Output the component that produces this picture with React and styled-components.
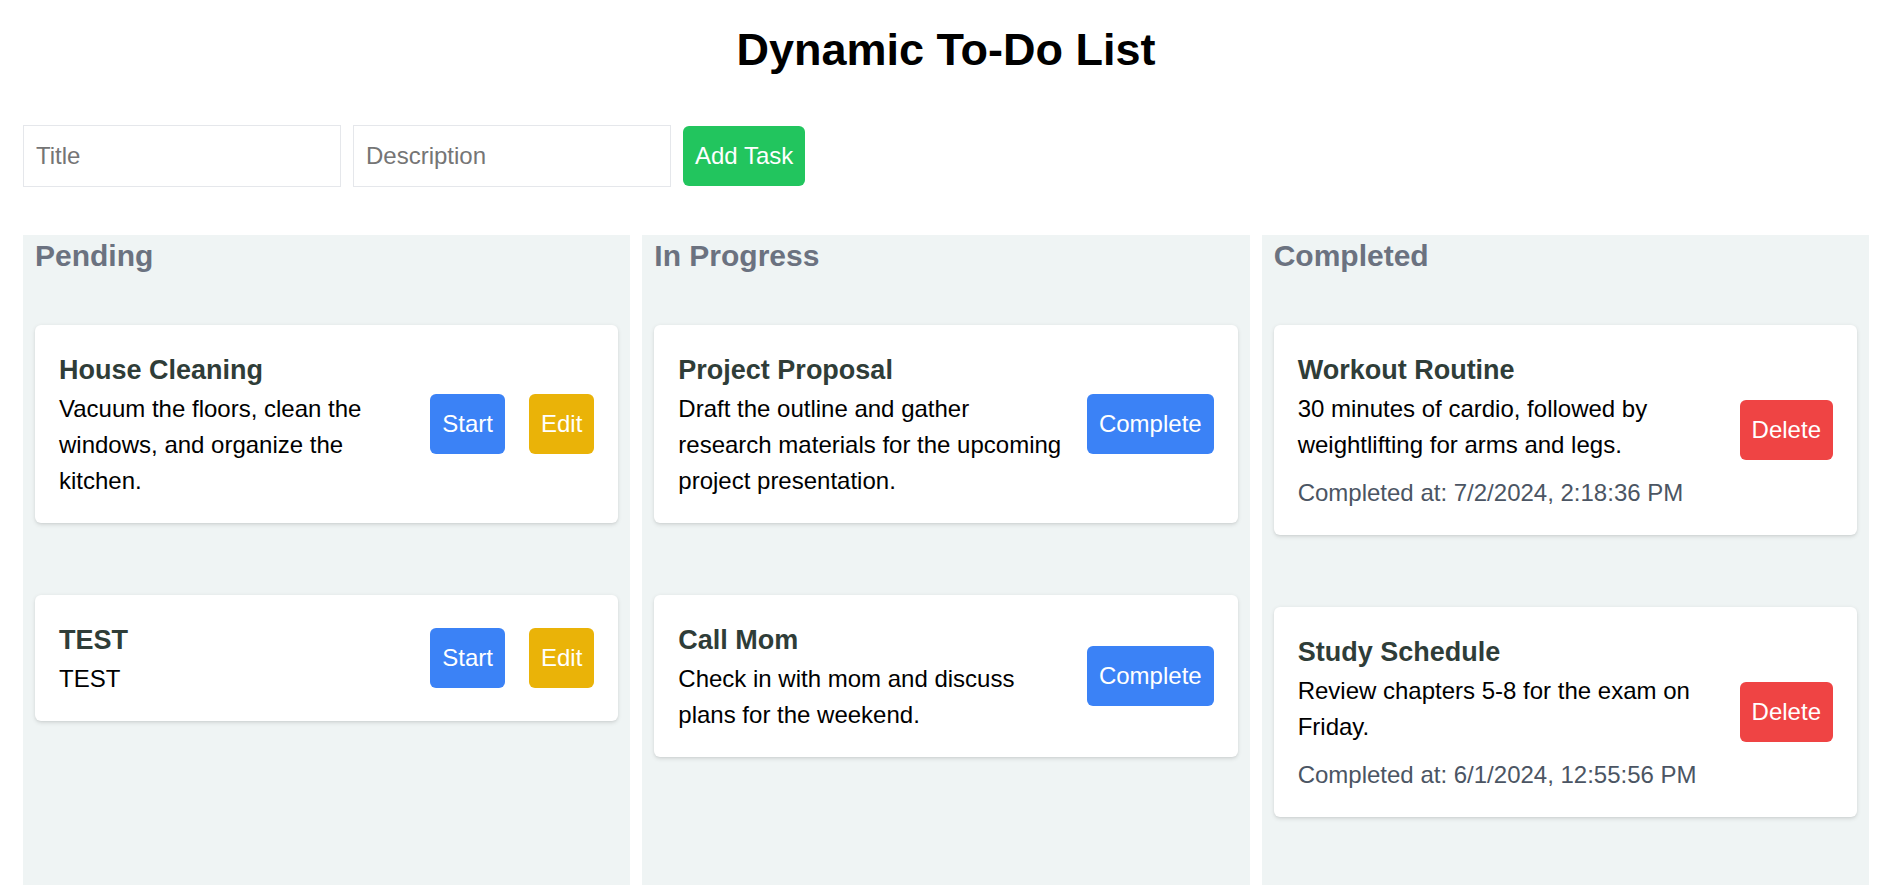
import React from 'react'
import styled, { createGlobalStyle } from 'styled-components'

const GlobalStyle = createGlobalStyle`
  * {
    box-sizing: border-box;
  }

  body {
    margin: 0;
    background: #ffffff;
    font-family: "Liberation Sans", Arial, sans-serif;
  }
`

const Page = styled.div`
  padding: 23px 16px 0 23px;
`

const Heading = styled.h1`
  margin: 0 0 48px;
  text-align: center;
  font-size: 45px;
  line-height: 54px;
  font-weight: 700;
  color: #000000;
`

const Form = styled.div`
  display: flex;
  align-items: center;
  gap: 12px;
  margin-bottom: 48px;
`

const Input = styled.input`
  width: 318px;
  height: 62px;
  padding: 12px;
  border: 1px solid #e5e7eb;
  border-radius: 0;
  outline: none;
  font-family: inherit;
  font-size: 24px;
  line-height: 36px;
  color: #111827;

  ::placeholder {
    color: #9ca3af;
  }
`

const Button = styled.button`
  padding: 12px;
  border: none;
  border-radius: 6px;
  cursor: pointer;
  font-family: inherit;
  font-size: 24px;
  line-height: 36px;
  color: #ffffff;
  background-color: ${({ tone }) => ({
    green:  '#22c55e',
    blue:   '#3b82f6',
    yellow: '#eab308',
    red:    '#ef4444',
  })[tone]};
`

const Board = styled.div`
  display: grid;
  grid-template-columns: repeat(3, 1fr);
  gap: 12px;
`

const Column = styled.section`
  min-height: 680px;
  padding: 0 12px 24px;
  background: #eff4f4;
`

const ColumnTitle = styled.h2`
  margin: 0 0 48px;
  font-size: 30px;
  line-height: 42px;
  font-weight: 700;
  color: #6b7280;
`

const CardList = styled.div`
  display: flex;
  flex-direction: column;
  gap: 72px;
`

const Card = styled.div`
  display: flex;
  align-items: center;
  justify-content: space-between;
  gap: 20px;
  padding: 24px;
  background: #ffffff;
  border-radius: 6px;
  box-shadow: 0 1.5px 4.5px rgba(0, 0, 0, 0.1),
              0 1.5px 3px -1.5px rgba(0, 0, 0, 0.1);
`

const CardBody = styled.div`
  flex: 1 1 auto;
  min-width: 0;
`

const CardTitle = styled.h3`
  margin: 0;
  font-size: 27px;
  line-height: 42px;
  font-weight: 700;
  color: #2f3d38;
`

const CardText = styled.p`
  margin: 0;
  font-size: 24px;
  line-height: 36px;
  color: #000000;
`

const CompletedAt = styled.p`
  margin: 12px 0 0;
  font-size: 24px;
  line-height: 36px;
  color: #4b5563;
`

const Actions = styled.div`
  display: flex;
  flex-shrink: 0;
  gap: 24px;
`

const columns = [
  {
    title: 'Pending',
    actions: [{ label: 'Start', tone: 'blue' }, { label: 'Edit', tone: 'yellow' }],
    tasks: [
      { title: 'House Cleaning', text: 'Vacuum the floors, clean the windows, and organize the kitchen.' },
      { title: 'TEST', text: 'TEST' },
    ],
  },
  {
    title: 'In Progress',
    actions: [{ label: 'Complete', tone: 'blue' }],
    tasks: [
      { title: 'Project Proposal', text: 'Draft the outline and gather research materials for the upcoming project presentation.' },
      { title: 'Call Mom', text: 'Check in with mom and discuss plans for the weekend.' },
    ],
  },
  {
    title: 'Completed',
    actions: [{ label: 'Delete', tone: 'red' }],
    tasks: [
      { title: 'Workout Routine', text: '30 minutes of cardio, followed by weightlifting for arms and legs.', done: '7/2/2024, 2:18:36 PM' },
      { title: 'Study Schedule', text: 'Review chapters 5-8 for the exam on Friday.', done: '6/1/2024, 12:55:56 PM' },
    ],
  },
]

const App = () => (
  <Page>
    <GlobalStyle/>
    <Heading>Dynamic To-Do List</Heading>
    <Form>
      <Input placeholder="Title"/>
      <Input placeholder="Description"/>
      <Button tone="green">Add Task</Button>
    </Form>
    <Board>
      {columns.map(column => (
        <Column key={column.title}>
          <ColumnTitle>{column.title}</ColumnTitle>
          <CardList>
            {column.tasks.map(task => (
              <Card key={task.title}>
                <CardBody>
                  <CardTitle>{task.title}</CardTitle>
                  <CardText>{task.text}</CardText>
                  {task.done && <CompletedAt>Completed at: {task.done}</CompletedAt>}
                </CardBody>
                <Actions>
                  {column.actions.map(action => (
                    <Button key={action.label} tone={action.tone}>{action.label}</Button>
                  ))}
                </Actions>
              </Card>
            ))}
          </CardList>
        </Column>
      ))}
    </Board>
  </Page>
)

export default App
